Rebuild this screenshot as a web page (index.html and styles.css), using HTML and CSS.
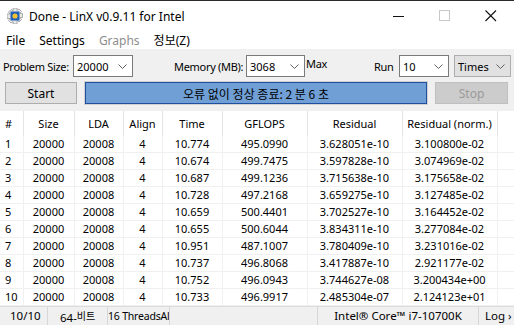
FILE: index.html
```html
<!DOCTYPE html>
<html>
<head lang="ko">
    <meta charset="UTF-8">
    <title>LinX</title>
<link rel="stylesheet" href="styles.css">
</head>
<body>
<div class="window">
    <div class="titlebar">
        <svg class="app_icon" width="16" height="16" viewBox="0 0 16 16">
            <path d="M6 0h4v2.5l2-1.5 2.5 2.5-1.5 2h2.5v4H13l1.5 2-2.5 2.5-2-1.5V16H6v-2.5l-2 1.5-2.5-2.5 1.5-2H0V6h3L1.5 4 4 1.5 6 3z" fill="#e8e8e8" stroke="#9a9a9a" stroke-width="0.8"/>
            <rect x="3.5" y="3.5" width="9" height="9" fill="#1f5fb8"/>
            <circle cx="8" cy="8" r="2.6" fill="#f2c230"/>
        </svg>
        <span class="title">Done - LinX v0.9.11 for Intel</span>
        <div class="controls">
            <span class="ctl"><svg width="12" height="12" viewBox="0 0 12 12"><path d="M0 6.5h11" stroke="#111" stroke-width="1"/></svg></span>
            <span class="ctl"><svg width="12" height="12" viewBox="0 0 12 12"><rect x="0.5" y="0.5" width="10" height="10" fill="none" stroke="#c8c8c8"/></svg></span>
            <span class="ctl"><svg width="12" height="12" viewBox="0 0 12 12"><path d="M0.5 0.5l10.5 10.5M11 0.5L0.5 11" stroke="#111" stroke-width="1.1"/></svg></span>
        </div>
    </div>
    <div class="menubar">
        <span class="menu">File</span>
        <span class="menu">Settings</span>
        <span class="menu disabled">Graphs</span>
        <span class="menu">정보(Z)</span>
    </div>
    <div class="toolbar">
        <div class="row">
            <span class="lbl lbl_size">Problem Size:</span>
            <div class="combo combo_size"><span>20000</span><svg class="chev" width="9" height="5" viewBox="0 0 9 5"><path d="M0.5 0.5L4.5 4.5L8.5 0.5" fill="none" stroke="#606060"/></svg></div>
            <span class="lbl lbl_mem">Memory (MB):</span>
            <div class="combo combo_mem"><span>3068</span><svg class="chev" width="9" height="5" viewBox="0 0 9 5"><path d="M0.5 0.5L4.5 4.5L8.5 0.5" fill="none" stroke="#606060"/></svg></div>
            <span class="lbl lbl_max">Max</span>
            <span class="lbl lbl_run">Run</span>
            <div class="combo combo_run"><span>10</span><svg class="chev" width="9" height="5" viewBox="0 0 9 5"><path d="M0.5 0.5L4.5 4.5L8.5 0.5" fill="none" stroke="#606060"/></svg></div>
            <div class="combo combo_times"><span>Times</span><svg class="chev" width="9" height="5" viewBox="0 0 9 5"><path d="M0.5 0.5L4.5 4.5L8.5 0.5" fill="none" stroke="#606060"/></svg></div>
        </div>
        <div class="row row2">
            <button class="btn start">Start</button>
            <div class="progress">오류 없이 정상 종료: 2 분 6 초</div>
            <button class="btn stop">Stop</button>
        </div>
    </div>
    <div class="list">
        <table class="grid">
            <colgroup>
                <col style="width:23px"><col style="width:51px"><col style="width:49px"><col style="width:39px">
                <col style="width:60px"><col style="width:85px"><col style="width:95px"><col style="width:95px"><col>
            </colgroup>
            <thead>
                <tr><th class="num">#</th><th>Size</th><th>LDA</th><th>Align</th><th>Time</th><th>GFLOPS</th><th>Residual</th><th>Residual (norm.)</th><th></th></tr>
            </thead>
            <tbody id="rows"></tbody>
        </table>
    </div>
    <div class="statusbar">
        <span class="st st_run">10/10</span>
        <span class="st st_bit">64-<span class="ko">비트</span></span>
        <span class="st st_thr">16 ThreadsAl</span>
        <span class="st st_gap"></span>
        <span class="st st_cpu">Intel® Core™ i7-10700K</span>
        <span class="st st_log">Log ›</span>
    </div>
</div>
<script>
var data = [
    ["10.774","495.0990","3.628051e-10","3.100800e-02"],
    ["10.674","499.7475","3.597828e-10","3.074969e-02"],
    ["10.687","499.1236","3.715638e-10","3.175658e-02"],
    ["10.728","497.2168","3.659275e-10","3.127485e-02"],
    ["10.659","500.4401","3.702527e-10","3.164452e-02"],
    ["10.655","500.6044","3.834311e-10","3.277084e-02"],
    ["10.951","487.1007","3.780409e-10","3.231016e-02"],
    ["10.737","496.8068","3.417887e-10","2.921177e-02"],
    ["10.752","496.0943","3.744627e-08","3.200434e+00"],
    ["10.733","496.9917","2.485304e-07","2.124123e+01"]
];
var html = "";
for (var i = 0; i < data.length; i++) {
    var d = data[i];
    html += "<tr><td class='num'>" + (i + 1) + "</td><td>20000</td><td>20008</td><td>4</td>" +
        "<td>" + d[0] + "</td><td>" + d[1] + "</td><td>" + d[2] + "</td><td>" + d[3] + "</td><td></td></tr>";
}
document.getElementById("rows").innerHTML = html;
</script>
</body>
</html>
```

FILE: styles.css
```css
body {
	margin: 0;
	font-family: "Noto Sans", "Noto Sans CJK KR", sans-serif;
	font-size: 11px;
	color: #000;
}
.window {
	width: 514px;
	height: 325px;
	overflow: hidden;
	background-color: #f0f0f0;
	display: flex;
	flex-direction: column;
}
.titlebar {
	height: 30px;
	border-top: 1px solid #2b2b2b;
	background-color: #fff;
	display: flex;
	align-items: center;
}
.app_icon {
	margin-left: 7px;
	margin-right: 6px;
}
.title {
	font-size: 12px;
}
.controls {
	margin-left: auto;
	display: flex;
}
.ctl {
	width: 46px;
	height: 30px;
	display: flex;
	justify-content: center;
	align-items: center;
}
.menubar {
	height: 18px;
	background-color: #fff;
	display: flex;
	align-items: center;
	padding-left: 6px;
	font-size: 12px;
}
.menu {
	margin-right: 14px;
}
.menu.disabled {
	color: #8d8d8d;
}
.toolbar {
	padding-top: 6px;
	height: 56px;
}
.row {
	display: flex;
	align-items: center;
	height: 22px;
}
.row2 {
	margin-top: 5px;
}
.lbl {
	font-size: 11px;
	letter-spacing: -0.3px;
	white-space: nowrap;
	flex-shrink: 0;
}
.lbl_size {
	margin-left: 3px;
	width: 70px;
}
.lbl_mem {
	margin-left: 41px;
	width: 72px;
}
.lbl_max {
	margin-left: 1px;
	width: 22px;
	align-self: flex-start;
	margin-top: 1px;
}
.lbl_run {
	margin-left: 46px;
	width: 25px;
}
.combo {
	flex-shrink: 0;
	height: 22px;
	box-sizing: border-box;
	border: 1px solid #7a7a7a;
	background-color: #fff;
	display: flex;
	align-items: center;
	padding-left: 3px;
	font-size: 11px;
	position: relative;
}
.combo_size {
	width: 60px;
}
.combo_mem {
	width: 59px;
}
.combo_run {
	width: 50px;
}
.combo_times {
	width: 57px;
	margin-left: 5px;
	background-color: #e1e1e1;
	border-color: #adadad;
	padding-left: 3px;
}
.chev {
	position: absolute;
	right: 5px;
	top: 8px;
}
.btn {
	height: 22px;
	font-family: inherit;
	font-size: 12px;
	padding: 0;
}
.start {
	margin-left: 5px;
	width: 72px;
	background-color: #e1e1e1;
	border: 1px solid #adadad;
}
.stop {
	margin-left: 8px;
	width: 73px;
	background-color: #cccccc;
	border: 1px solid #bfbfbf;
	color: #9a9a9a;
}
.progress {
	margin-left: 8px;
	width: 342px;
	height: 22px;
	box-sizing: border-box;
	border: 1px solid #1f4f9e;
	box-shadow: 0 0 0 1px #d2d2d2;
	background-color: #6f9fd5;
	display: flex;
	justify-content: center;
	align-items: center;
	font-family: "Noto Sans CJK KR", sans-serif;
	font-size: 12px;
}
.list {
	margin-top: 3px;
	background-color: #fff;
	height: 196px;
}
.grid {
	width: 514px;
	border-collapse: collapse;
	table-layout: fixed;
}
.grid th {
	height: 25px;
	font-weight: normal;
	border-right: 1px solid #e5e5e5;
	padding: 0;
	text-align: center;
	white-space: nowrap;
}
.grid td {
	height: 16px;
	padding: 0;
	text-align: center;
	border-right: 1px solid #f0f0f0;
	border-bottom: 1px solid #f0f0f0;
	white-space: nowrap;
	line-height: 16px;
}
.grid th:last-child, .grid td:last-child {
	border-right: none;
}
.grid .num {
	text-align: left;
	padding-left: 5px;
}
.statusbar {
	height: 18px;
	border-top: 1px solid #dcdcdc;
	display: flex;
	align-items: center;
	font-size: 11.5px;
}
.st {
	height: 18px;
	line-height: 18px;
	border-right: 1px solid #d7d7d7;
	box-sizing: border-box;
	overflow: hidden;
	white-space: nowrap;
	flex-shrink: 0;
}
.st_run {
	width: 48px;
	padding-left: 10px;
}
.st_bit {
	width: 60px;
	padding-left: 12px;
}
.ko {
	font-family: "Noto Sans CJK KR", sans-serif;
	font-size: 10px;
	vertical-align: 2px;
}
.st_thr {
	width: 62px;
	font-size: 10.5px;
	letter-spacing: -0.2px;
}
.st_gap {
	width: 148px;
}
.st_cpu {
	width: 161px;
	text-align: center;
}
.st_log {
	border-right: none;
	padding-left: 6px;
}
```
